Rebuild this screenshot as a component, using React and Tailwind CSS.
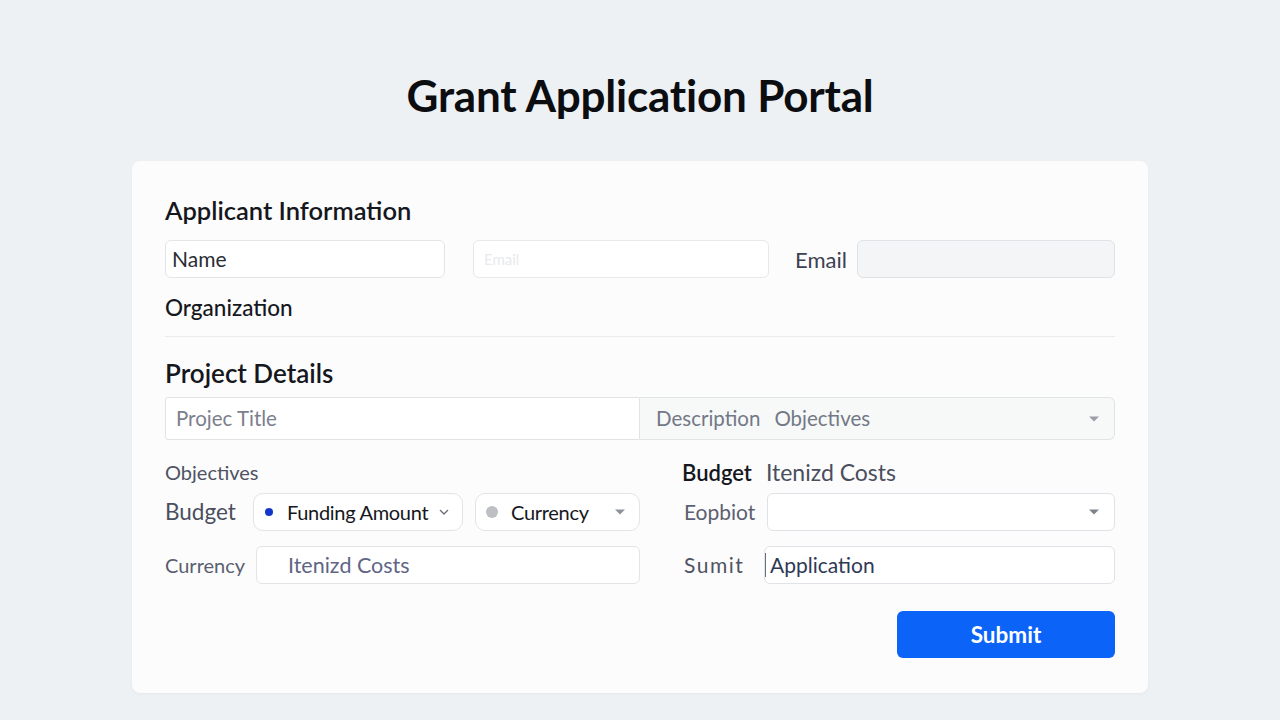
import React from 'react';

function Caret({ className = '' }) {
  return (
    <svg width="12" height="8" viewBox="0 0 12 8" className={className}>
      <path d="M1 1.5 L6 6.5 L11 1.5 Z" fill="currentColor" />
    </svg>
  );
}

function App() {
  return (
    <div
      className="min-h-screen w-full bg-[#eef1f3] pt-[70px] pb-[28px]"
      style={{ fontFamily: 'Lato, "Noto Sans", sans-serif' }}
    >
      <h1 className="text-center text-[44px] font-bold leading-[50px] text-[#0c0d10] tracking-[-0.2px]">
        Grant Application Portal
      </h1>

      <div className="mx-auto mt-[41px] w-[1016px] rounded-lg bg-[#fcfcfc] px-[33px] pt-[32px] pb-[35px] shadow-[0_1px_3px_rgba(0,0,0,0.04)]">
        {/* Applicant info */}
        <h2 className="text-[25.5px] font-semibold leading-[34px] text-[#15171c]">Applicant Information</h2>

        <div className="mt-[13px] flex items-center">
          <div className="flex h-[38px] w-[280px] items-center rounded-md border border-[#e3e5e8] bg-white px-[6px] text-[21px] text-[#2a2d36]">
            Name
          </div>
          <div className="ml-[28px] flex h-[38px] w-[296px] items-center rounded-md border border-[#e6e8eb] bg-white px-[10px] text-[15px] text-[#e8eaee]">
            Email
          </div>
          <span className="ml-[26px] text-[22px] text-[#3d4152]">Email</span>
          <div className="ml-[10px] h-[38px] flex-1 rounded-md border border-[#dfe2e6] bg-[#f4f5f6]" />
        </div>

        <div className="mt-[17px] text-[22.5px] font-medium leading-[26px] text-[#15171c]">Organization</div>

        <div className="mt-[15px] h-px w-full bg-[#e9ebee]" />

        {/* Project details */}
        <h2 className="mt-[21px] text-[26px] font-semibold leading-[30px] text-[#15171c]">Project Details</h2>

        <div className="mt-[9px] grid grid-cols-2">
          <div className="flex h-[43px] items-center rounded-l-[3px] border border-[#e1e3e6] bg-white px-[10px] text-[20.5px] text-[#7b808c]">
            Projec Title
          </div>
          <div className="flex h-[43px] items-center rounded-r-md border border-l-0 border-[#e1e3e6] bg-[#f7f8f8] pl-[16px] pr-[14px] text-[20.5px] text-[#737887]">
            <span>Description</span>
            <span className="ml-[14px]">Objectives</span>
            <Caret className="ml-auto text-[#9a9ea8]" />
          </div>

          <div className="mt-[20px] text-[20px] leading-[24px] text-[#4f5363]">Objectives</div>
          <div className="mt-[20px] pl-[42px] text-[22px] leading-[24px]">
            <span className="font-semibold text-[#15171c]">Budget</span>
            <span className="ml-[14px] text-[23px] text-[#4a4e5d]">Itenizd Costs</span>
          </div>

          {/* left row: budget */}
          <div className="mt-[8px] flex h-[38px] items-center">
            <span className="w-[88px] text-[22.5px] text-[#4a4e5e]">Budget</span>
            <div className="flex h-[38px] w-[210px] items-center rounded-[10px] border border-[#e2e4e8] bg-white pl-[11px] pr-[13px] text-[20px] text-[#15171c]">
              <span className="h-[8px] w-[8px] rounded-full bg-[#1436c8]" />
              <span className="ml-[14px] tracking-[-0.3px]">Funding Amount</span>
              <svg width="10" height="6" viewBox="0 0 10 6" className="ml-auto text-[#6d717c]">
                <path d="M1 1 L5 5 L9 1" fill="none" stroke="currentColor" strokeWidth="1.4" />
              </svg>
            </div>
            <div className="ml-[12px] flex h-[38px] flex-1 items-center rounded-[10px] border border-[#e2e4e8] bg-white pl-[10px] pr-[13px] text-[20px] text-[#15171c]">
              <span className="h-[12px] w-[12px] rounded-full bg-[#bdbfc3]" />
              <span className="ml-[13px] tracking-[-0.3px]">Currency</span>
              <Caret className="ml-auto text-[#8e929c]" />
            </div>
          </div>
          <div className="mt-[8px] flex h-[38px] items-center pl-[44px]">
            <span className="w-[83px] text-[21px] text-[#5c6070]">Eopbiot</span>
            <div className="flex h-[38px] flex-1 items-center rounded-md border border-[#dfe2e6] bg-white pr-[14px]">
              <Caret className="ml-auto text-[#7e828c]" />
            </div>
          </div>

          {/* left row: currency */}
          <div className="mt-[15px] flex h-[38px] items-center">
            <span className="w-[91px] text-[20px] text-[#5a5e70]">Currency</span>
            <div className="flex h-[38px] flex-1 items-center rounded-md border border-[#e2e4e8] bg-white pl-[31px] text-[21.5px] text-[#5f6585]">
              Itenizd Costs
            </div>
          </div>
          <div className="mt-[15px] flex h-[38px] items-center pl-[44px]">
            <span className="w-[80px] text-[21px] tracking-[1.5px] text-[#4f5363]">Sumit</span>
            <div className="flex h-[38px] flex-1 items-center rounded-md border border-[#dfe2e6] bg-white text-[21px] text-[#2e3a55]">
              <span className="h-[24px] w-px bg-[#6b7080]" />
              <span className="ml-[4px]">Application</span>
            </div>
          </div>
        </div>

        <div className="mt-[27px] flex justify-end">
          <button className="h-[47px] w-[218px] rounded-md bg-[#0b63f8] text-[22.5px] font-bold text-white">
            Submit
          </button>
        </div>
      </div>
    </div>
  );
}

export default App;
